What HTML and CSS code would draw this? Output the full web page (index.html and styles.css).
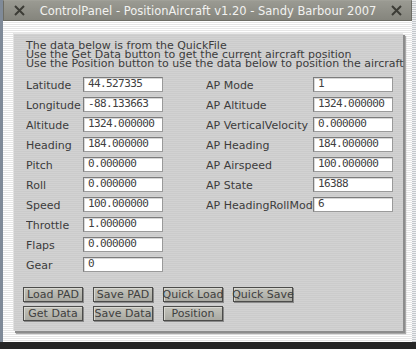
FILE: index.html
```html
<!DOCTYPE html>
<html>
<head>
<meta charset="utf-8">
<link rel="stylesheet" href="styles.css">
</head>
<body>
<div class="screen">
  <div class="window">
    <div class="titlebar">
      <span class="close">
        <svg width="11" height="11" viewBox="0 0 11 11"><path d="M1 1L10 10M10 1L1 10" stroke="#3c3c36" stroke-width="2" fill="none"/></svg>
      </span>
      <span class="title">ControlPanel - PositionAircraft v1.20 - Sandy Barbour 2007</span>
      <span class="close">
        <svg width="11" height="11" viewBox="0 0 11 11"><path d="M1 1L10 10M10 1L1 10" stroke="#3c3c36" stroke-width="2" fill="none"/></svg>
      </span>
    </div>
    <div class="client">
      <div class="panel">
        <div class="intro">
          <div>The data below is from the QuickFile</div>
          <div>Use the Get Data button to get the current aircraft position</div>
          <div>Use the Position button to use the data below to position the aircraft</div>
        </div>
        <div class="fields">
          <div class="col col-left">
            <div class="row"><span class="label">Latitude</span><span class="input">44.527335</span></div>
            <div class="row"><span class="label">Longitude</span><span class="input">-88.133663</span></div>
            <div class="row"><span class="label">Altitude</span><span class="input">1324.000000</span></div>
            <div class="row"><span class="label">Heading</span><span class="input">184.000000</span></div>
            <div class="row"><span class="label">Pitch</span><span class="input">0.000000</span></div>
            <div class="row"><span class="label">Roll</span><span class="input">0.000000</span></div>
            <div class="row"><span class="label">Speed</span><span class="input">100.000000</span></div>
            <div class="row"><span class="label">Throttle</span><span class="input">1.000000</span></div>
            <div class="row"><span class="label">Flaps</span><span class="input">0.000000</span></div>
            <div class="row"><span class="label">Gear</span><span class="input">0</span></div>
          </div>
          <div class="col col-right">
            <div class="row"><span class="label">AP Mode</span><span class="input">1</span></div>
            <div class="row"><span class="label">AP Altitude</span><span class="input">1324.000000</span></div>
            <div class="row"><span class="label">AP VerticalVelocity</span><span class="input">0.000000</span></div>
            <div class="row"><span class="label">AP Heading</span><span class="input">184.000000</span></div>
            <div class="row"><span class="label">AP Airspeed</span><span class="input">100.000000</span></div>
            <div class="row"><span class="label">AP State</span><span class="input">16388</span></div>
            <div class="row"><span class="label">AP HeadingRollMode</span><span class="input">6</span></div>
          </div>
        </div>
        <div class="buttons">
          <div class="btn-row">
            <span class="btn">Load PAD</span>
            <span class="btn">Save PAD</span>
            <span class="btn">Quick Load</span>
            <span class="btn">Quick Save</span>
          </div>
          <div class="btn-row">
            <span class="btn">Get Data</span>
            <span class="btn">Save Data</span>
            <span class="btn">Position</span>
          </div>
        </div>
      </div>
    </div>
  </div>
</div>
</body>
</html>
```
FILE: styles.css
```css
html, body {
  margin: 0;
  padding: 0;
}
body {
  width: 416px;
  height: 349px;
  overflow: hidden;
  background: #262626;
  font-family: "DejaVu Sans", sans-serif;
}
.screen {
  width: 416px;
  height: 349px;
  box-sizing: border-box;
  padding-left: 3px;
  background:
    linear-gradient(to bottom, transparent 342px, #262626 342px),
    linear-gradient(to right, #7f8a98 3px, transparent 3px),
    repeating-linear-gradient(to bottom, #eef0f2 0 1px, #c4c8cc 1px 2px);
}
.window {
  width: 409px;
  height: 342px;
  display: flex;
  flex-direction: column;
}
.titlebar {
  height: 21px;
  flex-shrink: 0;
  box-sizing: border-box;
  border: 1px solid #6c6c64;
  border-top-color: #a0a098;
  background: linear-gradient(to bottom, #9a9a92, #85857d);
  display: flex;
  align-items: center;
  padding: 0 9px 0 10px;
}
.close {
  width: 11px;
  height: 11px;
  flex-shrink: 0;
  display: flex;
}
.title {
  flex: 1;
  min-width: 0;
  text-align: center;
  color: #f2f2f0;
  font-size: 11.5px;
  white-space: nowrap;
}
.client {
  flex: 1;
  background: repeating-linear-gradient(to bottom, #ffffff 0 1px, #e6e6e6 1px 2px);
  padding: 12px 0 0 10px;
}
.panel {
  width: 390px;
  height: 298px;
  box-sizing: border-box;
  background: repeating-linear-gradient(to bottom, #d2d2d2 0 1px, #cbcbcb 1px 2px);
  border-top: 1px solid #e8e8e8;
  border-left: 1px solid #e0e0e0;
  box-shadow: 2px 2px 0 #8c8c8c, 3px 3px 1px #a8a8a8;
  padding: 7px 0 0 12px;
}
.intro {
  color: #3c3c3c;
  font-size: 11px;
  line-height: 9px;
  white-space: nowrap;
}
.fields {
  display: flex;
  gap: 43px;
  margin-top: 9px;
}
.col {
  display: flex;
  flex-direction: column;
  gap: 5px;
}
.row {
  display: flex;
  height: 15px;
}
.label {
  width: 57px;
  height: 19px;
  flex-shrink: 0;
  font-size: 11px;
  color: #3c3c3c;
  white-space: nowrap;
  overflow: hidden;
  line-height: 18px;
}
.col-right .label {
  width: 107px;
}
.input {
  width: 80px;
  height: 15px;
  flex-shrink: 0;
  box-sizing: border-box;
  background: #ffffff;
  border: 1px solid #9a9a9a;
  border-top-color: #7c7c7c;
  border-left-color: #7c7c7c;
  box-shadow: inset 1px 1px 0 #d8d8d8;
  font-family: "DejaVu Sans Mono", monospace;
  font-size: 11px;
  letter-spacing: -0.6px;
  color: #404040;
  line-height: 12px;
  padding-left: 4px;
  white-space: nowrap;
}
.buttons {
  display: flex;
  flex-direction: column;
  gap: 4px;
  margin: 15px 0 0 -3px;
}
.btn-row {
  display: flex;
  gap: 10px;
}
.btn {
  width: 60px;
  height: 15px;
  box-sizing: border-box;
  border: 1px solid #4c4c4a;
  background: linear-gradient(to bottom, #c4c4bc, #a9a9a2);
  box-shadow: inset 1px 1px 0 #d8d8d2, 1px 1px 0 #8a8a8a;
  color: #404040;
  font-size: 11px;
  line-height: 13px;
  display: flex;
  justify-content: center;
  white-space: nowrap;
}
```
